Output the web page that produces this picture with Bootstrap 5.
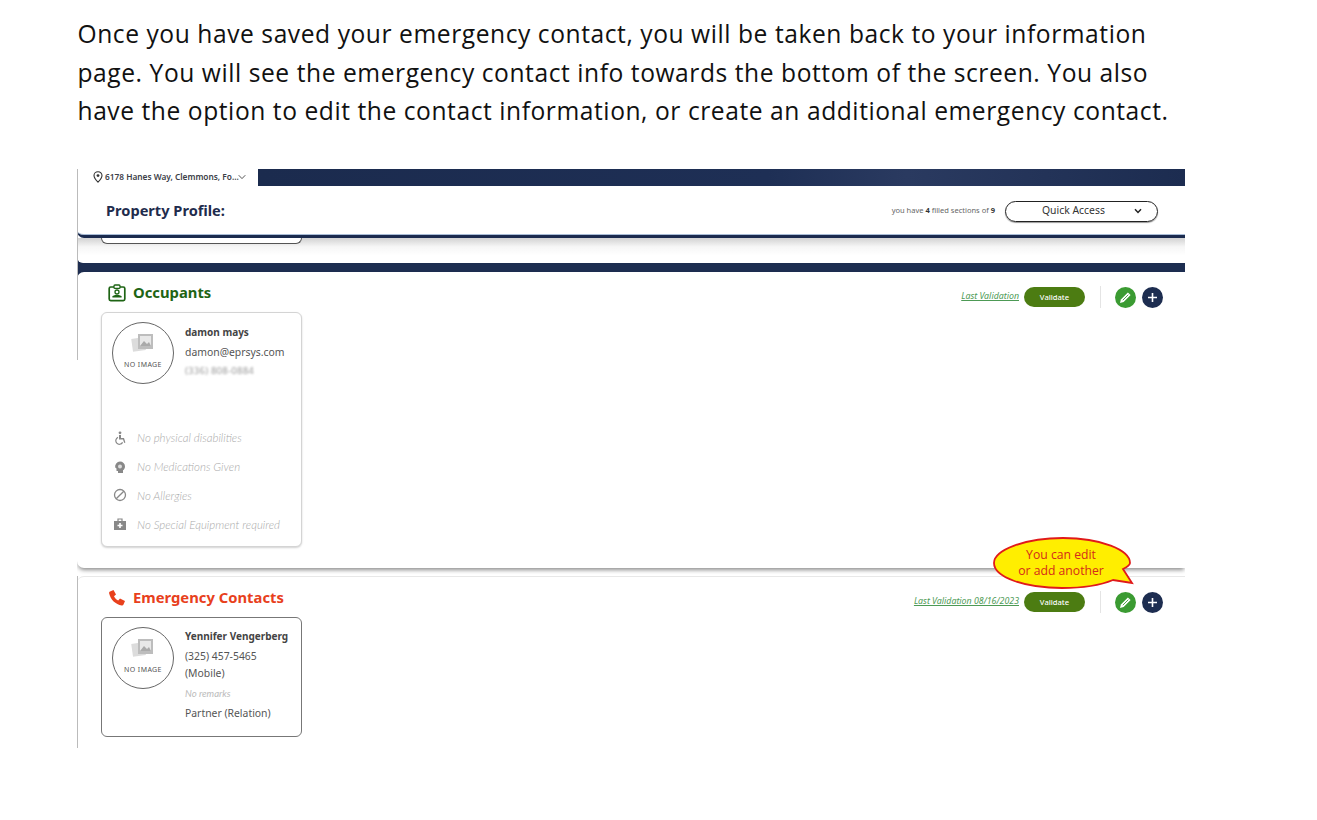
<!DOCTYPE html>
<html lang="en"><head><meta charset="utf-8"><title>Emergency contact</title>
<link href="https://cdn.jsdelivr.net/npm/bootstrap@5.3.0/dist/css/bootstrap.min.css" rel="stylesheet">
<style>
html,body{height:820px;overflow:hidden;background:#fff}
body{font-family:"Noto Sans",sans-serif;color:#3d3d3d}
.doc-wrap{padding:15px 0 0 77.5px;width:1185px}
.doc-text{font-family:"Open Sans","Noto Sans",sans-serif;font-size:24.6px;letter-spacing:.56px;line-height:38.5px;color:#111;margin:0 0 38px;width:1110px;white-space:nowrap}
.shot{width:1108px;margin-left:-.5px;position:relative;height:579px;background:#fff;overflow:hidden}
.edge-a,.edge-b{position:absolute;left:0;width:1px;background:#bbb;z-index:3}
.edge-a{top:0;height:191px}.edge-b{top:407px;height:172px}
.top-strip{height:17px}
.addr{width:181px;font-size:8.3px;font-weight:600;color:#3c4048;padding-left:16px;gap:2px;white-space:nowrap}
.addr svg{flex:none}
.addr svg:last-child{margin-left:-3px}
.strip-fill{background:linear-gradient(90deg,#1b2b4e,#1e2f55 55%,#2a3a60 70%,#1c2c50)}
.head-bar{height:52px;border-bottom:3px solid #1b2b4e;border-bottom-left-radius:7px;box-shadow:inset 0 -1px 0 #a9bcd6;padding:2px 27px 0 29px}
.head-title{font-size:14.6px;font-weight:700;color:#1f2c4d}
.fill-note{font-size:7.5px;color:#666;margin-right:10px}
.fill-note b{color:#333}
.quick{width:153px;height:21px;border:1.5px solid #222;border-radius:11px;font-size:10.4px;color:#333;padding:0 15px 0 36px;box-shadow:0 1px 1px #999}
.gap-zone{height:25px;background:linear-gradient(#d2d2d2,#f6f6f6 35%,#fff 70%);padding-left:24px;position:relative;border-bottom-left-radius:6px}
.stub{width:201px;height:6px;border:1px solid #555;border-top:0;border-radius:0 0 6px 6px;background:#fff}
.band{height:21px;margin:-6px 0;background:#1d2d50}
.sect{padding:10px 22px 0 24px;background:#fff;position:relative}
.sect-one{height:296px;border-radius:7px 0 0 7px;box-shadow:0 3px 4px -1px rgba(0,0,0,.45)}
.sect-two{margin-top:8px;height:172px;border-top:1px solid #e8e8e8;border-radius:7px 0 0 0}
.sect-head{height:22px;padding-left:7px}
.sect-title{font-size:14.8px;font-weight:700;margin-left:7px}
.tone-green{color:#1e6414}.tone-red{color:#e8401c}
.act-block{margin-top:9px}
.valid-link{font-size:8.8px;font-style:italic;color:#4d9a55;text-decoration:underline;margin-right:5px}
.valid-btn{width:61px;height:20px;border-radius:10px;background:#4c7c12;color:#fff;font-size:7.6px;font-weight:500;border:0;padding:1px 0 0}
.vr-line{width:1px;height:22px;background:#e4e4e4;margin:0 14px 0 15px}
.round-a,.round-b{width:21px;height:21px;border-radius:50%}
.round-a{background:#3b9b32;margin-right:6px}.round-b{background:#1d2d50}
.person{width:201px;background:#fff;border-radius:6px}
.person-one{height:235px;margin-top:8px;border:1px solid #d4d4d4;box-shadow:0 1px 2px rgba(0,0,0,.18)}
.person-two{height:120px;margin-top:8px;border:1px solid #777}
.photo{width:62px;height:62px;border:1px solid #666;border-radius:50%;flex:none;margin:9px 11px 0 10px;padding-bottom:4px}
.no-img{font-size:7px;letter-spacing:.4px;color:#555;line-height:8px;margin-top:8px;white-space:nowrap}
.info-a{padding-top:12px}.info-b{padding-top:11px}
.p-name{font-size:10px;font-weight:700;color:#444;line-height:14px;white-space:nowrap}
.p-line{font-size:10.4px;line-height:17px;color:#555;white-space:nowrap}
.gap-first{margin-top:5px}.gap-next{margin-top:1px}.gap-three{margin-top:3px}
.blurry{filter:blur(1px);color:#999;font-size:9.6px;letter-spacing:.2px}
.facts{margin-top:40px;padding-left:11px}
.fact{height:28.8px;font-size:11.5px;font-style:italic;font-weight:300;color:#aaa;font-family:"Lato",sans-serif;white-space:nowrap}
.fact svg{flex:none;margin-right:10px}
.remark{font-size:9.6px;font-style:italic;color:#bbb;line-height:17px;font-family:"Lato",sans-serif}
.callout{position:absolute;left:914px;top:367px;width:146px;height:55px;z-index:4}
.callout-text{position:absolute;left:915px;top:378px;width:138px;text-align:center;font-size:12.2px;line-height:16px;color:#d42a1a;font-family:"Open Sans",sans-serif;z-index:5}
</style></head><body>
<div class="doc-wrap">
<p class="doc-text">Once you have saved your emergency contact, you will be taken back to your information<br>page. You will see the emergency contact info towards the bottom of the screen. You also<br>have the option to edit the contact information, or create an additional emergency contact.</p>
<div class="shot">
  <div class="edge-a"></div><div class="edge-b"></div>
  <div class="top-strip d-flex">
    <div class="addr d-flex align-items-center"><svg width="10" height="12" viewBox="0 0 10 12"><path d="M5 .8C2.6.8 1 2.5 1 4.6c0 2.6 4 6.6 4 6.6s4-4 4-6.6C9 2.5 7.4.8 5 .8z" fill="none" stroke="#333" stroke-width="1.1"/><circle cx="5" cy="4.6" r="1.4" fill="#333"/></svg><span>6178 Hanes Way, Clemmons, Fo...</span><svg width="8" height="6" viewBox="0 0 8 6"><path d="M.7 1.2 4 4.6l3.3-3.4" fill="none" stroke="#444" stroke-width=".9"/></svg></div>
    <div class="strip-fill flex-grow-1"></div>
  </div>
  <div class="head-bar d-flex align-items-center justify-content-between">
    <div class="head-title">Property Profile:</div>
    <div class="d-flex align-items-center">
      <span class="fill-note">you have <b>4</b> filled sections of <b>9</b></span>
      <div class="quick d-flex align-items-center justify-content-between"><span>Quick Access</span><svg width="8" height="6" viewBox="0 0 8 6"><path d="M1 1.2 4 4.4l3-3.2" fill="none" stroke="#222" stroke-width="1.5"/></svg></div>
    </div>
  </div>
  <div class="gap-zone"><div class="stub"></div></div>
  <div class="band"></div>
  <div class="sect sect-one">
    <div class="sect-head d-flex align-items-center">
      <svg width="18" height="18" viewBox="0 0 18 18"><rect x="1.2" y="3" width="15.6" height="13.6" rx="1.5" fill="none" stroke="#1e6414" stroke-width="1.7"/><rect x="6" y="1" width="6" height="3.4" rx="1" fill="#fff" stroke="#1e6414" stroke-width="1.3"/><circle cx="9" cy="8" r="2" fill="none" stroke="#1e6414" stroke-width="1.3"/><path d="M4.4 13.6h9.2v-1c0-1-2-1.6-4.6-1.6s-4.6.6-4.6 1.6z" fill="#1e6414"/></svg>
      <span class="sect-title tone-green">Occupants</span>
      <div class="ms-auto act-block d-flex align-items-center">
        <span class="valid-link">Last Validation</span><button class="valid-btn">Validate</button><span class="vr-line"></span>
        <span class="round-a d-flex align-items-center justify-content-center"><svg width="15" height="15" viewBox="0 0 15 15"><path d="M2 13l.9-3.600 7-7 2.700 2.700-7 7z" fill="#fff"/><path d="M4.800 10.200l5.500-5.500" stroke="#3b9b32" stroke-width=".9"/></svg></span>
        <span class="round-b d-flex align-items-center justify-content-center"><svg width="11" height="11" viewBox="0 0 11 11"><path d="M5.500 1v9M1 5.500h9" stroke="#fff" stroke-width="1.600"/></svg></span>
      </div>
    </div>
    <div class="person person-one">
      <div class="d-flex">
        <div class="photo d-flex flex-column align-items-center justify-content-center">
          <svg width="24" height="20" viewBox="0 0 24 20"><rect x="1" y="5" width="13" height="13" fill="#dcdcdc" transform="rotate(-8 7 11)"/><rect x="7" y="1" width="15" height="15" fill="#bdbdbd"/><rect x="9" y="3" width="11" height="10" fill="#e8e8e8"/><path d="M9 13l4-5 3 3 2-2 2 4z" fill="#aaa"/></svg>
          <span class="no-img">NO IMAGE</span>
        </div>
        <div class="info-a">
          <div class="p-name">damon mays</div>
          <div class="p-line gap-first">damon@eprsys.com</div>
          <div class="p-line blurry gap-next">(336) 808-0884</div>
        </div>
      </div>
      <div class="facts">
        <div class="fact d-flex align-items-center"><svg width="14" height="14" viewBox="0 0 14 14"><circle cx="7" cy="1.8" r="1.4" fill="#888"/><path d="M6 4h2v3h3l1.400 4.500-1.200.4L10 8.600H6z" fill="#888"/><path d="M5 6.400a3.600 3.600 0 1 0 4.600 5" fill="none" stroke="#888" stroke-width="1.200"/></svg>No physical disabilities</div>
        <div class="fact d-flex align-items-center"><svg width="14" height="14" viewBox="0 0 14 14"><path d="M7 1.500a5 5 0 0 1 5 5c0 2-1 3-2 3.800V13H5v-2H3.500V8.500L2.200 7.500A5 5 0 0 1 7 1.500z" fill="#888"/><circle cx="7" cy="6.500" r="2" fill="#ddd"/></svg>No Medications Given</div>
        <div class="fact d-flex align-items-center"><svg width="14" height="14" viewBox="0 0 14 14"><circle cx="7" cy="7" r="5.500" fill="none" stroke="#888" stroke-width="1.300"/><path d="M3.200 10.800l7.600-7.600" stroke="#888" stroke-width="1.300"/></svg>No Allergies</div>
        <div class="fact d-flex align-items-center"><svg width="14" height="14" viewBox="0 0 14 14"><path d="M1 4h12v9H1z" fill="#888"/><path d="M5 4V2h4v2" fill="none" stroke="#888" stroke-width="1.200"/><path d="M7 6v5M4.500 8.500h5" stroke="#fff" stroke-width="1.600"/></svg>No Special Equipment required</div>
      </div>
    </div>
  </div>
  <div class="sect sect-two">
    <div class="sect-head d-flex align-items-center">
      <svg width="18" height="18" viewBox="0 0 18 18"><path d="M2 2.500 5.500 1l2.500 4.500-2 1.800c.8 1.900 2.300 3.400 4.200 4.200l1.800-2L17 12l-1.500 3.500c-.3.700-1 1-1.700.9C7.500 15.500 2.500 10.500 1.100 4.200 1 3.500 1.300 2.800 2 2.500z" fill="#e8401c"/></svg>
      <span class="sect-title tone-red">Emergency Contacts</span>
      <div class="ms-auto act-block d-flex align-items-center">
        <span class="valid-link">Last Validation 08/16/2023</span><button class="valid-btn">Validate</button><span class="vr-line"></span>
        <span class="round-a d-flex align-items-center justify-content-center"><svg width="15" height="15" viewBox="0 0 15 15"><path d="M2 13l.9-3.600 7-7 2.700 2.700-7 7z" fill="#fff"/><path d="M4.800 10.200l5.500-5.500" stroke="#3b9b32" stroke-width=".9"/></svg></span>
        <span class="round-b d-flex align-items-center justify-content-center"><svg width="11" height="11" viewBox="0 0 11 11"><path d="M5.500 1v9M1 5.500h9" stroke="#fff" stroke-width="1.600"/></svg></span>
      </div>
    </div>
    <div class="person person-two d-flex">
      <div class="photo d-flex flex-column align-items-center justify-content-center">
        <svg width="24" height="20" viewBox="0 0 24 20"><rect x="1" y="5" width="13" height="13" fill="#dcdcdc" transform="rotate(-8 7 11)"/><rect x="7" y="1" width="15" height="15" fill="#bdbdbd"/><rect x="9" y="3" width="11" height="10" fill="#e8e8e8"/><path d="M9 13l4-5 3 3 2-2 2 4z" fill="#aaa"/></svg>
        <span class="no-img">NO IMAGE</span>
      </div>
      <div class="info-b">
        <div class="p-name">Yennifer Vengerberg</div>
        <div class="p-line gap-first">(325) 457-5465</div>
        <div class="p-line">(Mobile)</div>
        <div class="remark gap-three">No remarks</div>
        <div class="p-line gap-three">Partner (Relation)</div>
      </div>
    </div>
  </div>
  <svg class="callout" viewBox="0 0 146 55"><path d="M72 2C34 2 3 14 3 27c0 14 30 25 68 25 20 0 39-3 51-8l19 3-9-14c4-2 7-4 7-6C139 14 110 2 72 2z" fill="#ffee00" stroke="#e01a1a" stroke-width="1.800"/></svg>
  <div class="callout-text">You can edit<br>or add another</div>
</div>
</div>
</body></html>
